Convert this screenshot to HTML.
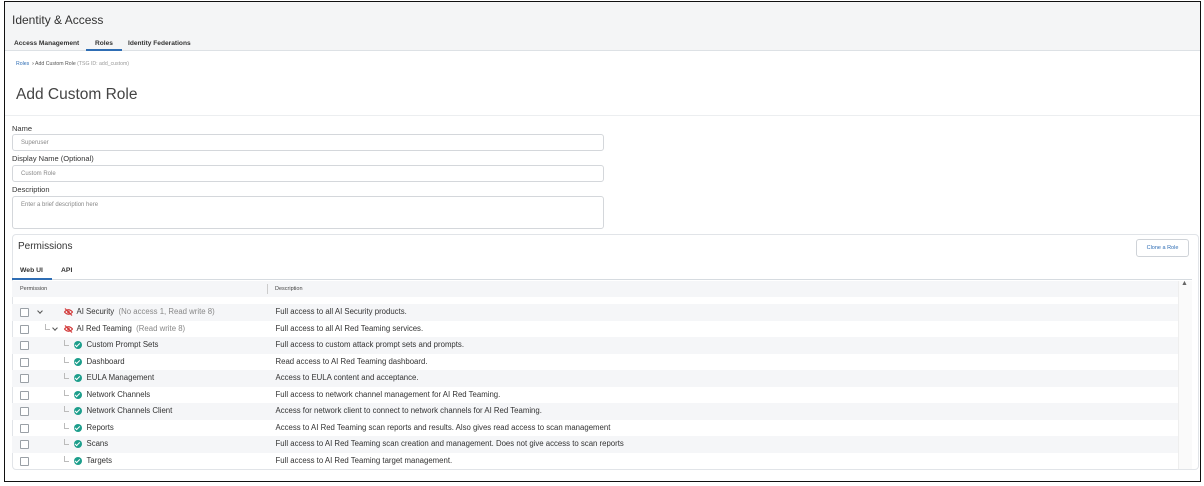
<!DOCTYPE html>
<html><head><meta charset="utf-8"><style>
*{box-sizing:border-box;margin:0;padding:0}
body{width:1204px;height:486px;background:#fff;font-family:"Liberation Sans",sans-serif;color:#333;position:relative;overflow:hidden}
.frame{position:absolute;left:4px;top:1px;width:1197px;height:481px;border:1.5px solid #111;overflow:hidden}
.a{position:absolute;white-space:nowrap}
.hdr{position:absolute;left:0;top:0;width:100%;height:49px;background:#f4f5f6;border-bottom:1px solid #dde1e5}
.inp{position:absolute;left:7px;width:592px;border:1px solid #d4d7db;border-radius:3px;background:#fff;font-size:6px;color:#888;padding:5px 8px}
.row{position:absolute;left:7px;width:1166px;height:16.5px}
.g{background:#f5f6f8}
.cb{position:absolute;left:8px;top:4px;width:9px;height:9px;border:1px solid #9aa0a6;border-radius:1px;background:#fff}
.t{position:absolute;top:3px;font-size:7.8px;color:#333}
.d{position:absolute;left:263.5px;top:3px;font-size:7.8px;color:#333}
.ok{position:absolute;top:4px;width:8px;height:8px;border-radius:50%;background:#1d9e8c}
.ok:after{content:"";position:absolute;left:2.3px;top:1.3px;width:2px;height:3.6px;border:solid #fff;border-width:0 1.2px 1.2px 0;transform:rotate(45deg)}
.l{position:absolute;top:3px;width:5px;height:6px;border-left:1px solid #bbb;border-bottom:1px solid #bbb}
.ch{position:absolute;top:5px;width:4px;height:4px;border:solid #555;border-width:0 1.2px 1.2px 0;transform:rotate(45deg)}
.eye{position:absolute;top:4px}
</style></head><body>
<div class="frame">
<div class="hdr"></div>
<div class="a" style="left:7px;top:11px;font-size:12px;color:#333">Identity &amp; Access</div>
<div class="a" style="left:9px;top:38px;font-size:6.6px;font-weight:bold;color:#333">Access Management</div>
<div class="a" style="left:90px;top:38px;font-size:6.6px;font-weight:bold;color:#333">Roles</div>
<div class="a" style="left:81px;top:47px;width:36px;height:2px;background:#2e6db4"></div>
<div class="a" style="left:123px;top:38px;font-size:6.6px;font-weight:bold;color:#333">Identity Federations</div>
<div class="a" style="left:11px;top:59px;font-size:5.2px;color:#555"><span style="color:#2e6db4">Roles</span> &nbsp;<b>›</b> Add Custom Role <span style="color:#999">(TSG ID: add_custom)</span></div>
<div class="a" style="left:11px;top:84px;font-size:15.5px;font-weight:300;color:#444">Add Custom Role</div>
<div class="a" style="left:0;top:113px;width:100%;height:1px;background:#eceef0"></div>
<div class="a" style="left:7px;top:122px;font-size:7.5px;color:#333">Name</div>
<div class="inp" style="top:132px;height:17px">Superuser</div>
<div class="a" style="left:7px;top:152px;font-size:7.5px;color:#333">Display Name (Optional)</div>
<div class="inp" style="top:163px;height:17px">Custom Role</div>
<div class="a" style="left:7px;top:183px;font-size:7.5px;color:#333">Description</div>
<div class="inp" style="top:194px;height:33px">Enter a brief description here</div>
<div class="a" style="left:7px;top:232px;width:1187px;height:236px;border:1px solid #e1e4e8;border-radius:4px"></div>
<div class="a" style="left:13px;top:239px;font-size:10px;color:#333">Permissions</div>
<div class="a" style="left:1131px;top:237px;width:53px;height:18px;border:1px solid #cfd3d8;border-radius:3px;font-size:5.5px;color:#2e6db4;text-align:center;line-height:16px">Clone a Role</div>
<div class="a" style="left:15px;top:265px;font-size:6.8px;font-weight:bold;color:#333">Web UI</div>
<div class="a" style="left:56px;top:265px;font-size:6.8px;font-weight:bold;color:#333">API</div>
<div class="a" style="left:7px;top:277px;width:1180px;height:1px;background:#d6dbe0"></div>
<div class="a" style="left:7px;top:276px;width:40px;height:2px;background:#2e6db4"></div>
<div class="a" style="left:7px;top:279px;width:1166px;height:16px;background:#f5f6f8"></div>
<div class="a" style="left:15px;top:284px;font-size:5.5px;color:#444">Permission</div>
<div class="a" style="left:262px;top:282px;width:1px;height:10px;background:#ccc"></div>
<div class="a" style="left:270px;top:284px;font-size:5.5px;color:#444">Description</div>
<div class="a" style="left:1173px;top:279px;width:14px;height:188px;background:#fafafa;border-left:1px solid #eee"></div>
<div class="a" style="left:1176px;top:278px;font-size:7px;color:#666">▲</div>

<div class="row g" style="top:302px"><div class="cb"></div><div class="ch" style="left:26px"></div><svg class="eye" style="left:52px" width="9" height="8" viewBox="0 0 9 8"><path d="M0.5 4 Q4.5 -0.5 8.5 4 Q4.5 8.5 0.5 4Z" fill="none" stroke="#d23b3b" stroke-width="1.2"/><circle cx="4.5" cy="4" r="1.3" fill="#d23b3b"/><path d="M1 0.5 L8 7.5" stroke="#d23b3b" stroke-width="1.2"/></svg><div class="t" style="left:64.5px">AI Security <span style="color:#888">&nbsp;(No access 1, Read write 8)</span></div><div class="d">Full access to all AI Security products.</div></div>
<div class="row" style="top:318.5px"><div class="cb"></div><div class="l" style="left:33px"></div><div class="ch" style="left:41px"></div><svg class="eye" style="left:52px" width="9" height="8" viewBox="0 0 9 8"><path d="M0.5 4 Q4.5 -0.5 8.5 4 Q4.5 8.5 0.5 4Z" fill="none" stroke="#d23b3b" stroke-width="1.2"/><circle cx="4.5" cy="4" r="1.3" fill="#d23b3b"/><path d="M1 0.5 L8 7.5" stroke="#d23b3b" stroke-width="1.2"/></svg><div class="t" style="left:64.5px">AI Red Teaming <span style="color:#888">&nbsp;(Read write 8)</span></div><div class="d">Full access to all AI Red Teaming services.</div></div>
<div class="row g" style="top:335px"><div class="cb"></div><div class="l" style="left:52px"></div><div class="ok" style="left:62px"></div><div class="t" style="left:74.5px">Custom Prompt Sets</div><div class="d">Full access to custom attack prompt sets and prompts.</div></div>
<div class="row" style="top:351.5px"><div class="cb"></div><div class="l" style="left:52px"></div><div class="ok" style="left:62px"></div><div class="t" style="left:74.5px">Dashboard</div><div class="d">Read access to AI Red Teaming dashboard.</div></div>
<div class="row g" style="top:368px"><div class="cb"></div><div class="l" style="left:52px"></div><div class="ok" style="left:62px"></div><div class="t" style="left:74.5px">EULA Management</div><div class="d">Access to EULA content and acceptance.</div></div>
<div class="row" style="top:384.5px"><div class="cb"></div><div class="l" style="left:52px"></div><div class="ok" style="left:62px"></div><div class="t" style="left:74.5px">Network Channels</div><div class="d">Full access to network channel management for AI Red Teaming.</div></div>
<div class="row g" style="top:401px"><div class="cb"></div><div class="l" style="left:52px"></div><div class="ok" style="left:62px"></div><div class="t" style="left:74.5px">Network Channels Client</div><div class="d">Access for network client to connect to network channels for AI Red Teaming.</div></div>
<div class="row" style="top:417.5px"><div class="cb"></div><div class="l" style="left:52px"></div><div class="ok" style="left:62px"></div><div class="t" style="left:74.5px">Reports</div><div class="d">Access to AI Red Teaming scan reports and results. Also gives read access to scan management</div></div>
<div class="row g" style="top:434px"><div class="cb"></div><div class="l" style="left:52px"></div><div class="ok" style="left:62px"></div><div class="t" style="left:74.5px">Scans</div><div class="d">Full access to AI Red Teaming scan creation and management. Does not give access to scan reports</div></div>
<div class="row" style="top:450.5px"><div class="cb"></div><div class="l" style="left:52px"></div><div class="ok" style="left:62px"></div><div class="t" style="left:74.5px">Targets</div><div class="d">Full access to AI Red Teaming target management.</div></div>
</div>
</body></html>
